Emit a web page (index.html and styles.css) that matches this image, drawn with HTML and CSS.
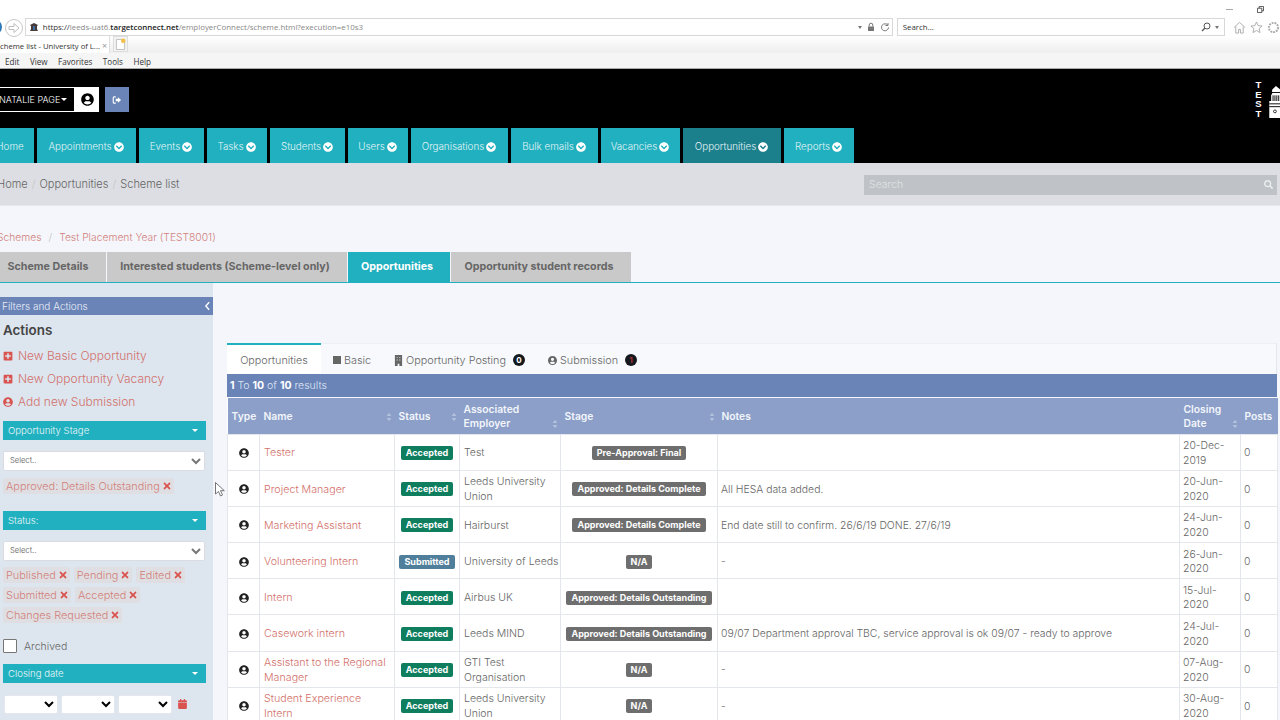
FILE: index.html
```html
<!DOCTYPE html>
<html lang="en">
<head>
    <meta charset="UTF-8">
    <meta name="viewport" content="width=device-width, initial-scale=1.0">
    <title>Scheme list - University of Leeds</title>
    <link rel="stylesheet" href="styles.css">
</head>
<body>
    <svg class="icon-defs" aria-hidden="true">
        <symbol id="i-user" viewBox="0 0 496 512"><path d="M248 8C111 8 0 119 0 256s111 248 248 248 248-111 248-248S385 8 248 8zm0 96c48.6 0 88 39.4 88 88s-39.4 88-88 88-88-39.4-88-88 39.4-88 88-88zm0 344c-58.7 0-111.3-26.6-146.5-68.2 18.8-35.4 55.6-59.8 98.5-59.8 2.4 0 4.8.4 7.1 1.1 13 4.2 26.6 6.9 40.9 6.9 14.3 0 28-2.7 40.9-6.9 2.3-.7 4.7-1.1 7.1-1.1 42.9 0 79.7 24.4 98.5 59.8C359.3 421.4 306.7 448 248 448z"/></symbol>
        <symbol id="i-chev" viewBox="0 0 512 512"><path d="M504 256c0 137-111 248-248 248S8 393 8 256 119 8 256 8s248 111 248 248zM273 369.9l135.5-135.5c9.4-9.4 9.4-24.6 0-33.9l-17-17c-9.4-9.4-24.6-9.4-33.9 0L256 285.1 154.4 183.5c-9.4-9.4-24.6-9.4-33.9 0l-17 17c-9.4 9.4-9.4 24.6 0 33.9L239 369.9c9.4 9.4 24.6 9.4 34 0z"/></symbol>
        <symbol id="i-plus" viewBox="0 0 448 512"><path d="M400 32H48C21.5 32 0 53.5 0 80v352c0 26.5 21.5 48 48 48h352c26.5 0 48-21.5 48-48V80c0-26.5-21.5-48-48-48zm-32 252c0 6.6-5.4 12-12 12h-92v92c0 6.6-5.4 12-12 12h-56c-6.6 0-12-5.4-12-12v-92H92c-6.6 0-12-5.4-12-12v-56c0-6.6 5.4-12 12-12h92v-92c0-6.6 5.4-12 12-12h56c6.6 0 12 5.4 12 12v92h92c6.6 0 12 5.4 12 12v56z"/></symbol>
        <symbol id="i-x" viewBox="0 0 352 512"><path d="M242.72 256l100.07-100.07c12.28-12.28 12.28-32.19 0-44.48l-22.24-22.24c-12.28-12.28-32.19-12.28-44.48 0L176 189.28 75.93 89.21c-12.28-12.28-32.19-12.28-44.48 0L9.21 111.45c-12.28 12.28-12.28 32.19 0 44.48L109.28 256 9.21 356.07c-12.28 12.28-12.28 32.19 0 44.48l22.24 22.24c12.28 12.28 32.2 12.28 44.48 0L176 322.72l100.07 100.07c12.28 12.28 32.2 12.28 44.48 0l22.24-22.24c12.28-12.28 12.28-32.19 0-44.48L242.72 256z"/></symbol>
        <symbol id="i-sort" viewBox="0 0 10 16"><path d="M5 1l4 5.5H1zM5 15L1 9.5h8z"/></symbol>
    </svg>

    <div class="browser">
        <div class="addr-row">
            <span class="back-btn"></span>
            <span class="fwd-btn">
                <svg viewBox="0 0 16 16"><path d="M3 6.500h5V3.500L13 8l-5 4.500V9.500H3z" fill="none" stroke="#bdbdbd"/></svg>
            </span>
            <div class="url-box">
                <svg class="favicon" viewBox="0 0 10 10"><path d="M1 3l4-2 4 2-1 1v3l1 2H1l1-2V4z" fill="#4a3b3b"/><path d="M4 4h2v4H4z" fill="#3a6ea5"/></svg>
                <span class="url"><span class="url-dark">https://</span>leeds-uat6.<span class="url-host">targetconnect.net</span>/employerConnect/scheme.html?execution=e10s3</span>
                <span class="url-tools">
                    <span class="mini-caret"></span>
                    <svg viewBox="0 0 10 10"><path d="M2 4.500h6V9H2z" fill="#777"/><path d="M3.200 4.500V3a1.800 1.800 0 0 1 3.600 0v1.500" fill="none" stroke="#777"/></svg>
                    <svg viewBox="0 0 10 10"><path d="M7.800 3.200A3.500 3.500 0 1 0 8.500 5.500M8 1v2.500H5.500" fill="none" stroke="#777"/></svg>
                </span>
            </div>
            <div class="search-box">
                <span>Search...</span>
                <span class="search-tools">
                    <svg viewBox="0 0 10 10"><circle cx="6" cy="4" r="3" fill="none" stroke="#555"/><path d="M3.800 6.200L1 9" stroke="#555" stroke-width="1.300"/></svg>
                    <span class="mini-caret"></span>
                </span>
            </div>
            <div class="browser-tools">
                <svg viewBox="0 0 14 14"><path d="M1 7l6-5.500L13 7M3 6v7h3V9h2v4h3V6" fill="none" stroke="#aaa"/></svg>
                <svg viewBox="0 0 14 14"><path d="M7 1l1.800 4 4.200.4-3.200 2.800 1 4.300L7 10.200 3.200 12.500l1-4.300L1 5.400 5.200 5z" fill="none" stroke="#aaa"/></svg>
                <svg viewBox="0 0 14 14"><circle cx="7" cy="7" r="5" fill="none" stroke="#aaa" stroke-width="2" stroke-dasharray="2 1"/></svg>
            </div>
            <div class="win-btns">
                <span class="win-min"></span>
                <svg viewBox="0 0 8 8"><path d="M.5 2.500h5v5h-5zM2.500 2.500V.5h5v5h-2" fill="none" stroke="#444"/></svg>
            </div>
        </div>
        <div class="tab-row">
            <div class="page-tab">cheme list - University of L... <span class="page-tab-x">×</span></div>
            <div class="new-tab">
                <svg viewBox="0 0 12 14"><path d="M1.500 1.500h6l3 3v8h-9z" fill="#fff" stroke="#bbb"/><circle cx="9" cy="3" r="2.500" fill="#f3c14b"/></svg>
            </div>
        </div>
        <div class="menu-row">
            <span>Edit</span><span>View</span><span>Favorites</span><span>Tools</span><span>Help</span>
        </div>
    </div>

    <header class="site-header">
        <div class="user-row">
            <div class="user-name">NATALIE PAGE<span class="name-caret"></span></div>
            <div class="user-pic"><svg class="ico"><use href="#i-user"/></svg></div>
            <div class="logout">
                <svg viewBox="0 0 16 16"><path d="M6 3H3.500A1.500 1.500 0 0 0 2 4.500v7A1.500 1.500 0 0 0 3.500 13H6" fill="none" stroke="#fff" stroke-width="1.800"/><path d="M9.500 3.500L14.500 8l-5 4.500V10H6V6h3.500z" fill="#fff"/></svg>
            </div>
            <div class="logo">
                <span class="logo-text">TEST</span>
                <svg class="logo-mark" viewBox="0 0 14 36"><path d="M2 36V18h2v-7h1V6l4-4 5 4v30z" fill="#fff"/><path d="M4 9h10M6 12v6M8 12v6M10 12v6M12 12v6M2 21h12M2 24h12" stroke="#000" fill="none"/><circle cx="8" cy="29" r="1.500" fill="none" stroke="#000" stroke-width=".8"/></svg>
            </div>
        </div>
        <nav class="main-nav">
            <a>Home</a>
            <a>Appointments <svg class="ico"><use href="#i-chev"/></svg></a>
            <a>Events <svg class="ico"><use href="#i-chev"/></svg></a>
            <a>Tasks <svg class="ico"><use href="#i-chev"/></svg></a>
            <a>Students <svg class="ico"><use href="#i-chev"/></svg></a>
            <a>Users <svg class="ico"><use href="#i-chev"/></svg></a>
            <a>Organisations <svg class="ico"><use href="#i-chev"/></svg></a>
            <a>Bulk emails <svg class="ico"><use href="#i-chev"/></svg></a>
            <a>Vacancies <svg class="ico"><use href="#i-chev"/></svg></a>
            <a class="active">Opportunities <svg class="ico"><use href="#i-chev"/></svg></a>
            <a>Reports <svg class="ico"><use href="#i-chev"/></svg></a>
        </nav>
    </header>

    <div class="crumb-bar">
        <div class="crumbs">
            <span>Home</span><span class="sep">/</span><span>Opportunities</span><span class="sep">/</span><span>Scheme list</span>
        </div>
        <div class="crumb-search">
            <span>Search</span>
            <svg viewBox="0 0 512 512"><path d="M505 442.700L405.300 343c-4.500-4.500-10.600-7-17-7H372c27.600-35.300 44-79.700 44-128C416 93.100 322.900 0 208 0S0 93.100 0 208s93.100 208 208 208c48.300 0 92.700-16.400 128-44v16.300c0 6.400 2.500 12.500 7 17l99.700 99.700c9.400 9.400 24.600 9.400 33.900 0l28.300-28.300c9.400-9.400 9.400-24.600.1-34zM208 336c-70.700 0-128-57.200-128-128 0-70.700 57.200-128 128-128 70.700 0 128 57.200 128 128 0 70.700-57.200 128-128 128z"/></svg>
        </div>
    </div>

    <div class="scheme-crumbs">
        <span>Schemes</span><span class="sep">/</span><span>Test Placement Year (TEST8001)</span>
    </div>

    <div class="scheme-tabs">
        <a>Scheme Details</a>
        <a>Interested students (Scheme-level only)</a>
        <a class="active">Opportunities</a>
        <a>Opportunity student records</a>
    </div>

    <div class="content">
        <aside class="sidebar">
            <div class="filters-head">
                <span>Filters and Actions</span>
                <svg viewBox="0 0 8 12"><path d="M6 1.500L2 6l4 4.500" fill="none" stroke="#fff" stroke-width="1.600"/></svg>
            </div>
            <div class="side-body">
                <h2>Actions</h2>
                <ul class="action-list">
                    <li><svg class="ico"><use href="#i-plus"/></svg>New Basic Opportunity</li>
                    <li><svg class="ico"><use href="#i-plus"/></svg>New Opportunity Vacancy</li>
                    <li><svg class="ico"><use href="#i-user"/></svg>Add new Submission</li>
                </ul>

                <div class="filter-head">Opportunity Stage<span class="caret"></span></div>
                <select class="filter-select"><option>Select..</option></select>
                <div class="tags tags-stage">
                    <span class="tag">Approved: Details Outstanding <svg class="ico"><use href="#i-x"/></svg></span>
                </div>

                <div class="filter-head">Status:<span class="caret"></span></div>
                <select class="filter-select"><option>Select..</option></select>
                <div class="tags">
                    <span class="tag">Published <svg class="ico"><use href="#i-x"/></svg></span>
                    <span class="tag">Pending <svg class="ico"><use href="#i-x"/></svg></span>
                    <span class="tag">Edited <svg class="ico"><use href="#i-x"/></svg></span>
                    <span class="tag">Submitted <svg class="ico"><use href="#i-x"/></svg></span>
                    <span class="tag">Accepted <svg class="ico"><use href="#i-x"/></svg></span>
                    <span class="tag">Changes Requested <svg class="ico"><use href="#i-x"/></svg></span>
                </div>

                <label class="archived"><input type="checkbox"> Archived</label>

                <div class="filter-head">Closing date<span class="caret"></span></div>
                <div class="date-row">
                    <select></select>
                    <select></select>
                    <select></select>
                    <svg viewBox="0 0 448 512"><path d="M0 464c0 26.500 21.500 48 48 48h352c26.500 0 48-21.500 48-48V192H0v272zM400 64h-48V16c0-8.800-7.200-16-16-16h-32c-8.800 0-16 7.200-16 16v48H160V16c0-8.800-7.200-16-16-16h-32c-8.800 0-16 7.200-16 16v48H48C21.500 64 0 85.500 0 112v48h448v-48c0-26.500-21.500-48-48-48z"/></svg>
                </div>
            </div>
        </aside>

        <main class="main-panel">
            <div class="panel-tabs">
                <a class="active">Opportunities</a>
                <a><span class="sq"></span>Basic</a>
                <a><svg class="tab-ico" viewBox="0 0 10 12"><path d="M1 0h8v12H6V9.500H4V12H1z" fill="#666"/><path d="M3 2h1v1H3zM6 2h1v1H6zM3 5h1v1H3zM6 5h1v1H6z" fill="#fff"/></svg>Opportunity Posting<span class="count">0</span></a>
                <a><svg class="ico tab-ico"><use href="#i-user"/></svg>Submission<span class="count count-red">1</span></a>
            </div>
            <div class="results"><b>1</b> To <b>10</b> of <b>10</b> results</div>
            <table class="opps">
                <colgroup>
                    <col class="c-type"><col class="c-name"><col class="c-status"><col class="c-emp">
                    <col class="c-stage"><col class="c-notes"><col class="c-date"><col class="c-posts">
                </colgroup>
                <thead>
                    <tr>
                        <th>Type</th>
                        <th><div class="th-in">Name<svg class="sort"><use href="#i-sort"/></svg></div></th>
                        <th><div class="th-in">Status<svg class="sort"><use href="#i-sort"/></svg></div></th>
                        <th><div class="th-in"><span>Associated Employer</span><svg class="sort"><use href="#i-sort"/></svg></div></th>
                        <th><div class="th-in">Stage<svg class="sort"><use href="#i-sort"/></svg></div></th>
                        <th>Notes</th>
                        <th><div class="th-in"><span>Closing Date</span><svg class="sort"><use href="#i-sort"/></svg></div></th>
                        <th>Posts</th>
                    </tr>
                </thead>
                <tbody>
                    <tr>
                        <td class="mid"><svg class="ico"><use href="#i-user"/></svg></td>
                        <td><a>Tester</a></td>
                        <td class="mid"><span class="badge ok">Accepted</span></td>
                        <td>Test</td>
                        <td class="mid"><span class="badge grey">Pre-Approval: Final</span></td>
                        <td></td>
                        <td>20-Dec-2019</td>
                        <td>0</td>
                    </tr>
                    <tr>
                        <td class="mid"><svg class="ico"><use href="#i-user"/></svg></td>
                        <td><a>Project Manager</a></td>
                        <td class="mid"><span class="badge ok">Accepted</span></td>
                        <td>Leeds University Union</td>
                        <td class="mid"><span class="badge grey">Approved: Details Complete</span></td>
                        <td>All HESA data added.</td>
                        <td>20-Jun-2020</td>
                        <td>0</td>
                    </tr>
                    <tr>
                        <td class="mid"><svg class="ico"><use href="#i-user"/></svg></td>
                        <td><a>Marketing Assistant</a></td>
                        <td class="mid"><span class="badge ok">Accepted</span></td>
                        <td>Hairburst</td>
                        <td class="mid"><span class="badge grey">Approved: Details Complete</span></td>
                        <td>End date still to confirm. 26/6/19 DONE. 27/6/19</td>
                        <td>24-Jun-2020</td>
                        <td>0</td>
                    </tr>
                    <tr>
                        <td class="mid"><svg class="ico"><use href="#i-user"/></svg></td>
                        <td><a>Volunteering Intern</a></td>
                        <td class="mid"><span class="badge sub">Submitted</span></td>
                        <td class="nowrap">University of Leeds</td>
                        <td class="mid"><span class="badge grey">N/A</span></td>
                        <td>-</td>
                        <td>26-Jun-2020</td>
                        <td>0</td>
                    </tr>
                    <tr>
                        <td class="mid"><svg class="ico"><use href="#i-user"/></svg></td>
                        <td><a>Intern</a></td>
                        <td class="mid"><span class="badge ok">Accepted</span></td>
                        <td>Airbus UK</td>
                        <td class="mid"><span class="badge grey">Approved: Details Outstanding</span></td>
                        <td></td>
                        <td>15-Jul-2020</td>
                        <td>0</td>
                    </tr>
                    <tr>
                        <td class="mid"><svg class="ico"><use href="#i-user"/></svg></td>
                        <td><a>Casework intern</a></td>
                        <td class="mid"><span class="badge ok">Accepted</span></td>
                        <td>Leeds MIND</td>
                        <td class="mid"><span class="badge grey">Approved: Details Outstanding</span></td>
                        <td>09/07 Department approval TBC, service approval is ok 09/07 - ready to approve</td>
                        <td>24-Jul-2020</td>
                        <td>0</td>
                    </tr>
                    <tr>
                        <td class="mid"><svg class="ico"><use href="#i-user"/></svg></td>
                        <td><a>Assistant to the Regional Manager</a></td>
                        <td class="mid"><span class="badge ok">Accepted</span></td>
                        <td>GTI Test Organisation</td>
                        <td class="mid"><span class="badge grey">N/A</span></td>
                        <td>-</td>
                        <td>07-Aug-2020</td>
                        <td>0</td>
                    </tr>
                    <tr>
                        <td class="mid"><svg class="ico"><use href="#i-user"/></svg></td>
                        <td><a>Student Experience Intern</a></td>
                        <td class="mid"><span class="badge ok">Accepted</span></td>
                        <td>Leeds University Union</td>
                        <td class="mid"><span class="badge grey">N/A</span></td>
                        <td>-</td>
                        <td>30-Aug-2020</td>
                        <td>0</td>
                    </tr>
                </tbody>
            </table>
        </main>
    </div>

    <!-- mouse pointer caught in the shot -->
    <svg class="cursor" viewBox="0 0 10 15"><path d="M.5.5v11.500l3-2.500 2 4.500 2-1-2-4.300h3.800z" fill="#fff" stroke="#555" stroke-width=".8"/></svg>
</body>
</html>
```

FILE: styles.css
```css
body {
    margin: 0;
    width: 1280px;
    height: 720px;
    overflow: hidden;
    position: relative;
    font-family: Inter, "Open Sans", Arial, sans-serif;
    font-size: 11px;
    font-weight: 300;
    color: #666;
    background-color: #f4f6fb;
}
a {
    color: inherit;
    text-decoration: none;
}
.icon-defs {
    display: none;
}
.ico {
    width: 1em;
    height: 1em;
    fill: currentColor;
    flex-shrink: 0;
}

/* browser chrome */
.browser {
    height: 69px;
    background-color: #fff;
    font-family: "Open Sans", Arial, sans-serif;
    font-weight: 400;
    color: #333;
}
.addr-row {
    height: 36px;
    padding-top: 18px;
    box-sizing: border-box;
    display: flex;
    position: relative;
}
.back-btn {
    width: 16px;
    height: 16px;
    margin: 1px 0 0 -14px;
    border-radius: 50%;
    background-color: #2d78b8;
}
.fwd-btn {
    width: 16px;
    height: 16px;
    margin: 1px 0 0 3px;
    border: 1px solid #c8c8c8;
    border-radius: 50%;
    display: flex;
}
.url-box {
    width: 878px;
    height: 18px;
    margin-left: 2px;
    box-sizing: border-box;
    border: 1px solid #d8d8d8;
    display: flex;
    align-items: center;
    padding: 0 2px 0 3px;
    font-size: 7.9px;
    color: #888;
}
.favicon {
    width: 10px;
    height: 10px;
    margin-right: 4px;
}
.url-dark {
    color: #333;
}
.url-host {
    color: #222;
    font-weight: 600;
}
.url-tools {
    margin-left: auto;
    display: flex;
    align-items: center;
    gap: 4px;
}
.url-tools svg {
    width: 10px;
    height: 10px;
}
.mini-caret {
    width: 0;
    height: 0;
    border: 2.5px solid transparent;
    border-top: 3px solid #777;
    border-bottom: 0;
}
.search-box {
    width: 332px;
    height: 18px;
    margin-left: 4px;
    box-sizing: border-box;
    border: 1px solid #d8d8d8;
    display: flex;
    align-items: center;
    padding: 0 5px;
    font-size: 7.9px;
}
.search-tools {
    margin-left: auto;
    display: flex;
    align-items: center;
    gap: 4px;
}
.search-tools svg {
    width: 10px;
    height: 10px;
}
.browser-tools {
    display: flex;
    gap: 4px;
    margin-left: 8px;
    margin-top: 3px;
}
.browser-tools svg {
    width: 13px;
    height: 13px;
}
.win-btns {
    position: absolute;
    top: 6px;
    right: 16px;
    display: flex;
    align-items: center;
    gap: 24px;
}
.win-btns svg {
    width: 7px;
    height: 7px;
}
.win-min {
    width: 7px;
    height: 1px;
    background-color: #aaa;
}
.tab-row {
    height: 17px;
    display: flex;
    background: linear-gradient(#fff, #eee);
    font-size: 7.7px;
}
.page-tab {
    width: 110px;
    box-sizing: border-box;
    background-color: #fff;
    white-space: nowrap;
    overflow: hidden;
    line-height: 20px;
    border-right: 1px solid #ddd;
}
.page-tab-x {
    color: #999;
    font-size: 9px;
    line-height: 1;
}
.new-tab {
    width: 15px;
    height: 16px;
    margin-left: 3px;
    box-sizing: border-box;
    border: 1px solid #ddd;
    background-color: #f4f4f4;
    display: flex;
    align-items: center;
    justify-content: center;
}
.new-tab svg {
    width: 11px;
    height: 13px;
}
.menu-row {
    height: 16px;
    box-sizing: border-box;
    padding: 1px 0 0 5px;
    display: flex;
    gap: 10.5px;
    align-items: center;
    background-color: #f5f5f5;
    border-bottom: 1px solid #aaa;
    font-size: 8.1px;
}

/* site header */
.site-header {
    height: 94px;
    background-color: #000;
    color: #fff;
    display: flex;
    flex-direction: column;
}
.user-row {
    height: 59px;
    box-sizing: border-box;
    padding-top: 18px;
    display: flex;
}
.user-name {
    width: 65px;
    margin-left: -1px;
    border: 1px solid #fff;
    border-left: 0;
    height: 23px;
    padding-right: 10px;
    display: flex;
    align-items: center;
    font-size: 9px;
    white-space: nowrap;
}
.name-caret {
    margin-left: 1px;
    border: 3px solid transparent;
    border-top: 3px solid #fff;
    border-bottom: 0;
}
.user-pic {
    width: 24px;
    height: 25px;
    background-color: #fff;
    color: #000;
    display: flex;
    align-items: center;
    justify-content: center;
    font-size: 13px;
}
.logout {
    width: 24px;
    height: 25px;
    margin-left: 6px;
    background-color: #6a84b8;
    display: flex;
    align-items: center;
    justify-content: center;
}
.logout svg {
    width: 10px;
    height: 10px;
}
.logo {
    margin-left: auto;
    margin-right: -1px;
    margin-top: -5px;
    display: flex;
    gap: 5px;
    height: 36px;
}
.logo-text {
    margin-top: -3px;
    writing-mode: vertical-rl;
    text-orientation: upright;
    font-size: 9.5px;
    line-height: 8px;
    letter-spacing: -1.5px;
    font-weight: 700;
    font-family: "Liberation Sans", Arial, sans-serif;
}
.logo-mark {
    width: 14px;
    height: 34px;
    margin-top: 2px;
}
.main-nav {
    height: 35px;
    display: grid;
    grid-template-columns: 42px 99px 65px 60px 75px 60px 97px 87px 79px 98px 70px;
    gap: 3px;
    margin-left: -8px;
    justify-content: start;
}
.main-nav a {
    background-color: #21b0bf;
    color: #e2f4f6;
    display: flex;
    align-items: center;
    justify-content: center;
    gap: 2px;
    padding: 2px 1px 0 0;
    font-size: 9.8px;
    font-weight: 300;
    white-space: nowrap;
}
.main-nav a:first-child {
    padding-right: 6px;
}
.main-nav a.active {
    background-color: #1c7f8c;
}
.main-nav .ico {
    font-size: 10px;
    color: #fff;
}

/* breadcrumb bar */
.crumb-bar {
    height: 43px;
    box-sizing: border-box;
    background-color: #dcdee3;
    display: flex;
    align-items: center;
    justify-content: space-between;
    padding-right: 3px;
    border-bottom: 1px solid #e6e8ec;
}
.crumbs {
    display: flex;
    margin-left: -3px;
    font-size: 11px;
    color: #666;
}
.sep {
    color: #c4c4c4;
    margin: 0 4px;
}
.crumb-search {
    width: 413px;
    height: 20px;
    margin-top: 1px;
    box-sizing: border-box;
    background-color: #bfc2c6;
    color: #e0e2e5;
    padding: 0 4px 0 5px;
    display: flex;
    align-items: center;
    justify-content: space-between;
    font-size: 10.5px;
}
.crumb-search svg {
    width: 9px;
    height: 9px;
    fill: #eceef0;
}

/* scheme heading and tabs */
.scheme-crumbs {
    margin: 24px 0 0 -3px;
    height: 22px;
    line-height: 15px;
    display: flex;
    font-size: 10.3px;
    color: #d2807a;
}
.scheme-crumbs .sep {
    margin: 0 7px;
}
.scheme-tabs {
    height: 30px;
    display: flex;
    gap: 1px;
    margin-left: -6px;
}
.scheme-tabs a {
    box-sizing: border-box;
    padding: 0 4px 1px 0;
    background-color: #c9c9c9;
    color: #666;
    font-weight: 700;
    font-size: 10.7px;
    display: flex;
    align-items: center;
    justify-content: center;
}
.scheme-tabs a:nth-child(1) { width: 112px; }
.scheme-tabs a:nth-child(2) { width: 240px; }
.scheme-tabs a:nth-child(3) { width: 102px; background-color: #21b0bf; color: #fff; }
.scheme-tabs a:nth-child(4) { width: 180px; }

/* sidebar and main */
.content {
    display: flex;
    padding-right: 3px;
    border-top: 1px solid #21b0bf;
}
.sidebar {
    width: 213px;
    flex-shrink: 0;
    background-color: #dde5ef;
    padding-top: 14px;
    height: 440px;
    overflow: hidden;
}
.filters-head {
    height: 18px;
    background-color: #6a84b8;
    color: #e9eef7;
    padding: 0 2px;
    display: flex;
    align-items: center;
    justify-content: space-between;
    font-size: 10px;
}
.filters-head svg {
    width: 7px;
    height: 10px;
}
.side-body {
    padding: 0 7px 0 3px;
}
.side-body h2 {
    margin: 7px 0 6px;
    font-size: 13.4px;
    line-height: 16px;
    font-weight: 600;
    color: #444;
}
.action-list {
    list-style: none;
    margin: 0 0 7px;
    padding: 0;
    color: #d2716b;
    font-size: 12px;
}
.action-list li {
    height: 23.2px;
    display: flex;
    align-items: center;
    gap: 5px;
    white-space: nowrap;
}
.action-list .ico {
    width: 10px;
    height: 10px;
    color: #d9534f;
}
.filter-head {
    height: 19px;
    background-color: #21b0bf;
    color: #eaf7f8;
    padding: 0 8px 0 5px;
    display: flex;
    align-items: center;
    justify-content: space-between;
    font-size: 9.6px;
}
.caret {
    border: 3.5px solid transparent;
    border-top: 3.5px solid #fff;
    border-bottom: 0;
}
.filter-select {
    display: block;
    width: 202px;
    height: 20px;
    margin: 11px 0 6px;
    font-family: inherit;
    font-size: 7.5px;
    color: #777;
    background-color: #fff;
    border: 1px solid #d9dde3;
    border-radius: 2px;
    padding: 0 2px;
}
.tags {
    display: flex;
    flex-wrap: wrap;
    gap: 4px;
    width: 196px;
    margin-bottom: 17px;
}
.tags-stage {
    margin-top: 7px;
    margin-bottom: 17px;
}
.tag {
    height: 16px;
    display: inline-flex;
    align-items: center;
    gap: 3px;
    padding: 0 3px;
    background-color: #dfdfe3;
    color: #d2807a;
    font-size: 10.9px;
    border-radius: 2px;
    white-space: nowrap;
}
.tag .ico {
    width: 8px;
    height: 10px;
    color: #d9534f;
}
.archived {
    display: flex;
    align-items: center;
    gap: 7px;
    height: 15px;
    margin: -1px 0 10px;
    font-size: 10.5px;
}
.archived input {
    appearance: none;
    width: 14px;
    height: 14px;
    margin: 0;
    background-color: #fff;
    border: 1px solid #777;
    border-radius: 1px;
}
.date-row {
    display: flex;
    align-items: center;
    gap: 3px;
    margin-top: 12px;
    padding-left: 1px;
}
.date-row select {
    width: 54px;
    height: 19px;
    background-color: #fff;
    border: 1px solid #e4e8ee;
    border-radius: 2px;
}
.date-row svg {
    width: 9px;
    height: 10px;
    margin-left: 3px;
    fill: #d9534f;
}
.main-panel {
    flex: 1;
    margin-left: 14px;
    padding-top: 60px;
    min-width: 0;
}
.panel-tabs {
    height: 31px;
    box-sizing: border-box;
    display: flex;
    align-items: stretch;
    background-color: #f7f9fc;
    border-top: 1px solid #eceff4;
    border-right: 1px solid #e3e6ea;
}
.panel-tabs a {
    display: flex;
    align-items: center;
    padding: 2px 11px 0 12px;
    font-size: 10.8px;
    color: #666;
}
.panel-tabs a.active {
    width: 94px;
    box-sizing: border-box;
    justify-content: center;
    padding: 1px 0 0;
    background-color: #fff;
    border-top: 2px solid #21b0bf;
    margin-top: -1px;
}
.sq {
    width: 8px;
    height: 8px;
    margin-right: 3px;
    background-color: #666;
}
.tab-ico {
    width: 9px;
    height: 11px;
    margin-right: 3px;
    color: #666;
}
.count {
    width: 12px;
    height: 12px;
    margin-left: 7px;
    border-radius: 50%;
    background-color: #15191e;
    color: #fff;
    font-size: 8px;
    font-weight: 700;
    display: flex;
    align-items: center;
    justify-content: center;
}
.count-red {
    color: #a33;
}
.results {
    height: 23px;
    background-color: #6a84b8;
    color: #dfe6f3;
    padding-left: 3px;
    line-height: 23px;
    font-size: 10.5px;
}
.results b {
    color: #fff;
    font-weight: 700;
}

/* table */
.opps {
    width: 1050px;
    table-layout: fixed;
    border-collapse: collapse;
    background-color: #fff;
    margin-top: 1px;
}
.c-type { width: 32px; }
.c-name { width: 135px; }
.c-status { width: 65px; }
.c-emp { width: 101px; }
.c-stage { width: 157px; }
.c-notes { width: 462px; }
.c-date { width: 61px; }
.c-posts { width: 37px; }
.opps th {
    height: 36px;
    box-sizing: border-box;
    padding: 1px 3px 0 4px;
    background-color: #8b9fc9;
    color: #f2f5fa;
    font-size: 10.3px;
    font-weight: 600;
    line-height: 14.5px;
    text-align: left;
}
.th-in {
    display: flex;
    justify-content: space-between;
    align-items: flex-end;
}
.sort {
    width: 6px;
    height: 10px;
    fill: #b3c0dc;
    flex-shrink: 0;
    margin: 0 0 2px 2px;
}
.opps td {
    height: 36.2px;
    box-sizing: border-box;
    padding: 3px 3px 0 4px;
    border: 1px solid #e3e6ea;
    font-size: 10.5px;
    line-height: 14.5px;
    color: #666;
}
.opps td:nth-child(n+6) {
    padding-left: 3px;
    font-size: 10.4px;
}
.opps td a {
    color: #d2716b;
    font-size: 10.7px;
}
.opps td.mid {
    text-align: center;
    padding: 2px 0 0;
}
.opps td.nowrap {
    white-space: nowrap;
}
.opps td .ico {
    width: 10px;
    height: 10px;
    color: #222;
    vertical-align: middle;
}
.badge {
    display: inline-block;
    height: 14px;
    line-height: 14px;
    padding: 0 5px;
    border-radius: 2px;
    color: #fff;
    font-size: 9px;
    font-weight: 700;
    white-space: nowrap;
    vertical-align: middle;
}
.ok { background-color: #0f7e5f; }
.sub { background-color: #4f7f9b; }
.grey { background-color: #6e6e6e; }

.cursor {
    position: absolute;
    left: 215px;
    top: 482px;
    width: 10px;
    height: 15px;
}
```
